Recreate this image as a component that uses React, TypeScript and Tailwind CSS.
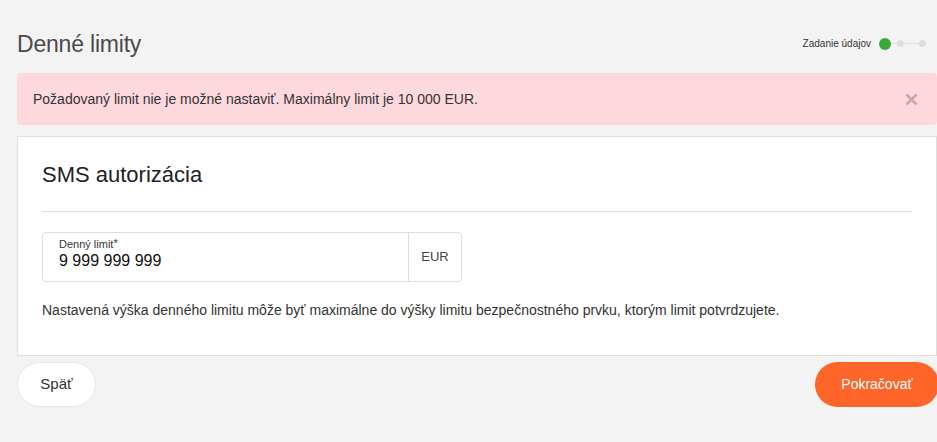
export default function App() {
  return (
    <div className="min-h-screen bg-[#f3f3f3] pl-[17px] font-['Liberation_Sans',Arial,sans-serif] text-[#333]">
      <div className="w-[920px]">
        <div className="flex items-center justify-between pt-[24px] h-[73px] pb-[10px]">
          <h1 className="text-[23px] leading-[28px] text-[#4a4a4a] tracking-[-0.2px]">Denné limity</h1>
          <div className="flex items-center pr-[11px]">
            <span className="text-[10px] text-[#333] mr-[8px]">Zadanie údajov</span>
            <span className="w-[12px] h-[12px] rounded-full bg-[#3aaa3a]"></span>
            <span className="w-[6px] h-[1px] bg-[#ddd]"></span>
            <span className="w-[7px] h-[7px] rounded-full bg-[#ddd]"></span>
            <span className="w-[15px] h-[1px] bg-[#ddd]"></span>
            <span className="w-[7px] h-[7px] rounded-full bg-[#ddd]"></span>
          </div>
        </div>

        <div className="flex items-center justify-between h-[52px] rounded-[4px] bg-[#fdd9de] pl-[16px] pr-[18px]">
          <p className="text-[14px] text-[#333]">
            Požadovaný limit nie je možné nastaviť. Maximálny limit je 10 000 EUR.
          </p>
          <svg width="13" height="13" viewBox="0 0 13 13" className="mr-[1px]">
            <path d="M1.5 1.5 L11.5 11.5 M11.5 1.5 L1.5 11.5" stroke="#c9a5ab" strokeWidth="2.6" />
          </svg>
        </div>

        <div className="mt-[11px] bg-white border border-[#dedede] px-[24px] pt-[24px] h-[220px]">
          <h2 className="text-[22px] leading-[28px] text-[#222]">SMS autorizácia</h2>
          <div className="mt-[22px] border-t border-[#e0e0e0]"></div>
          <div className="mt-[20px] flex w-[420px] h-[50px] rounded-[4px] border border-[#ddd]">
            <div className="flex-1 pl-[16px] pt-[5px]">
              <div className="text-[11px] leading-[13px] text-[#333]">
                Denný limit<sup className="text-[11px] relative top-[-1px]">*</sup>
              </div>
              <div className="text-[16px] leading-[20px] text-[#111]">9 999 999 999</div>
            </div>
            <div className="w-[53px] border-l border-[#ddd] flex items-center justify-center text-[13px] text-[#444]">
              EUR
            </div>
          </div>
          <p className="mt-[18px] text-[14px] text-[#333]">
            Nastavená výška denného limitu môže byť maximálne do výšky limitu bezpečnostného prvku, ktorým limit potvrdzujete.
          </p>
        </div>

        <div className="mt-[6px] flex justify-between">
          <button className="h-[45px] w-[79px] rounded-full bg-white border border-[#e6e6e6] text-[15px] text-[#333]">
            Späť
          </button>
          <button className="h-[45px] w-[124px] rounded-full bg-[#ff6428] text-[14px] text-white mr-[-2px]">
            Pokračovať
          </button>
        </div>
      </div>
    </div>
  );
}
